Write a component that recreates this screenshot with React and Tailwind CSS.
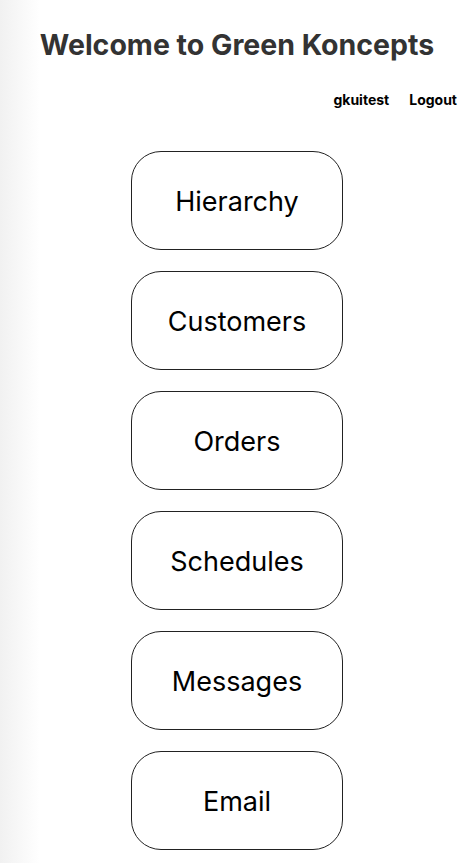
export default function App() {
  const links = ["Hierarchy", "Customers", "Orders", "Schedules", "Messages", "Email"];

  return (
    <div
      className="min-h-screen w-full bg-[linear-gradient(to_right,#f1f1f1,#ffffff_40px)] text-black"
      style={{ fontFamily: "Inter, 'Liberation Sans', sans-serif" }}
    >
      {/* Header */}
      <header className="flex flex-col">
        <h1 className="pt-[27px] text-center text-[28.5px] font-bold leading-[36px] text-[#333333]">
          Welcome to Green Koncepts
        </h1>
        <nav className="mt-[27px] flex justify-end gap-[20px] pr-[17px] text-[14px] font-bold leading-[20px]">
          <a href="#">gkuitest</a>
          <a href="#">Logout</a>
        </nav>
      </header>

      {/* Menu */}
      <main className="mt-[41px] flex flex-col items-center gap-[21px] pb-6">
        {links.map((label) => (
          <button
            key={label}
            className="flex h-[99px] w-[212px] items-center justify-center rounded-[30px] border border-[#222] bg-white pt-[3px] text-[27px] font-normal"
          >
            {label}
          </button>
        ))}
      </main>
    </div>
  );
}
